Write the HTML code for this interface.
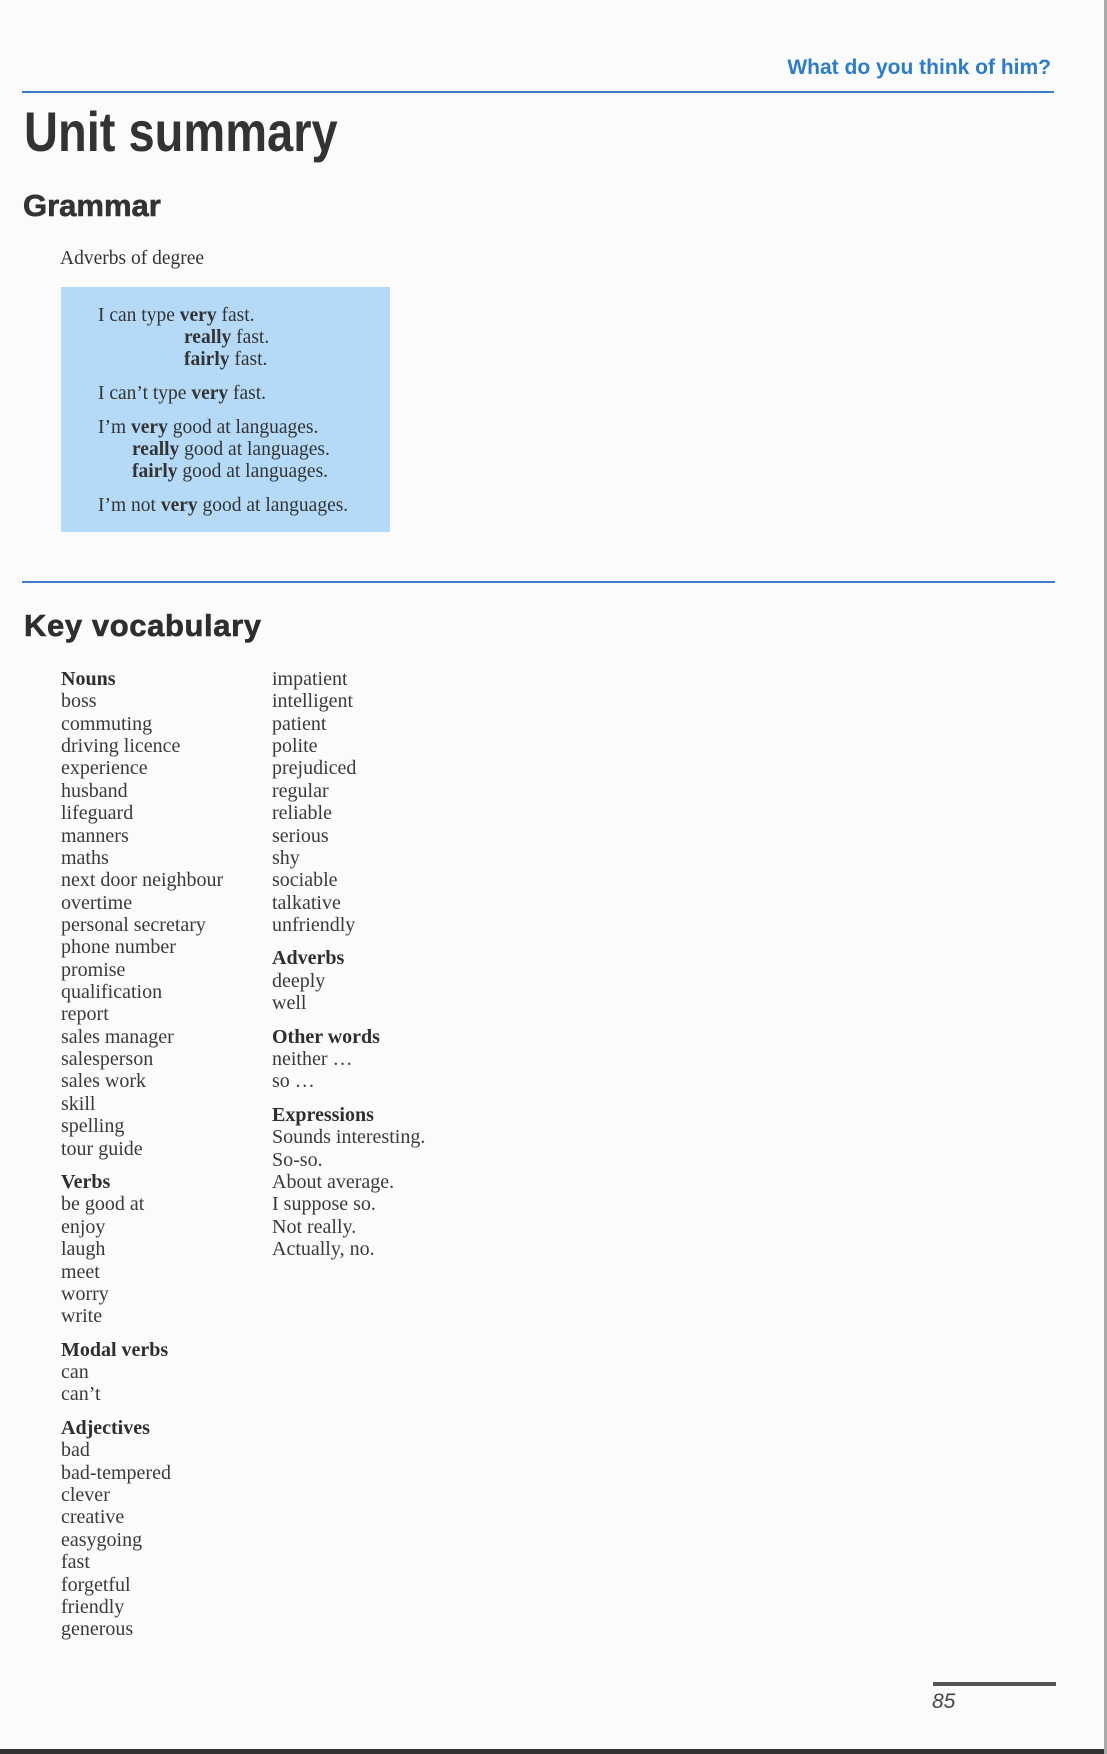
<!DOCTYPE html>
<html><head><meta charset="utf-8"><style>
html,body{margin:0;padding:0;}
body{width:1107px;height:1754px;position:relative;overflow:hidden;background:#fbfbfb;color:#333;}
.a{position:absolute;white-space:nowrap;}
.sans{font-family:"Liberation Sans",sans-serif;}
.serif{font-family:"Liberation Serif",serif;}
.hr{position:absolute;background:#3d7cc8;}
.col{position:absolute;font-family:"Liberation Serif",serif;font-size:20px;line-height:22.36px;color:#3a3a3a;}
.col div{white-space:nowrap;}
.col .h{font-weight:bold;margin-top:11.18px;color:#2e2e2e;}
.col .h.f{margin-top:0;}
.bx{position:absolute;font-family:"Liberation Serif",serif;font-size:19.5px;line-height:22px;color:#333;white-space:nowrap;}
</style></head><body>
<div class="a sans" style="right:56px;top:57px;font-size:21px;line-height:21px;color:#2b7ccb;font-weight:bold;">What do you think of him?</div>
<div class="hr" style="left:22px;top:91px;width:1032px;height:2px;"></div>
<div class="a sans" style="left:24px;top:104px;font-size:56px;line-height:56px;color:#333;font-weight:bold;transform:scaleX(0.84);transform-origin:left;">Unit summary</div>
<div class="a sans" style="left:23px;top:190px;font-size:31px;line-height:31px;font-weight:bold;color:#333;-webkit-text-stroke:0.6px #333;">Grammar</div>
<div class="a serif" style="left:60px;top:248px;font-size:19.5px;line-height:22px;color:#333;">Adverbs of degree</div>
<div class="a" style="left:61px;top:287px;width:329px;height:245px;background:#b4daf7;"></div>
<div class="bx" style="left:98px;top:305px;">I can type <b>very</b> fast.</div>
<div class="bx" style="left:184px;top:327px;"><b>really</b> fast.</div>
<div class="bx" style="left:184px;top:349px;"><b>fairly</b> fast.</div>
<div class="bx" style="left:98px;top:383px;">I can’t type <b>very</b> fast.</div>
<div class="bx" style="left:98px;top:417px;">I’m <b>very</b> good at languages.</div>
<div class="bx" style="left:132px;top:439px;"><b>really</b> good at languages.</div>
<div class="bx" style="left:132px;top:461px;"><b>fairly</b> good at languages.</div>
<div class="bx" style="left:98px;top:495px;">I’m not <b>very</b> good at languages.</div>
<div class="hr" style="left:22px;top:581px;width:1033px;height:2px;"></div>
<div class="a sans" style="left:24px;top:610px;font-size:31px;line-height:31px;font-weight:bold;color:#2e2e2e;letter-spacing:0.6px;-webkit-text-stroke:0.6px #2e2e2e;">Key vocabulary</div>
<div class="col" style="left:61px;top:668px;">
<div class="h f">Nouns</div><div>boss</div><div>commuting</div><div>driving licence</div><div>experience</div><div>husband</div><div>lifeguard</div><div>manners</div><div>maths</div><div>next door neighbour</div><div>overtime</div><div>personal secretary</div><div>phone number</div><div>promise</div><div>qualification</div><div>report</div><div>sales manager</div><div>salesperson</div><div>sales work</div><div>skill</div><div>spelling</div><div>tour guide</div>
<div class="h">Verbs</div><div>be good at</div><div>enjoy</div><div>laugh</div><div>meet</div><div>worry</div><div>write</div>
<div class="h">Modal verbs</div><div>can</div><div>can’t</div>
<div class="h">Adjectives</div><div>bad</div><div>bad-tempered</div><div>clever</div><div>creative</div><div>easygoing</div><div>fast</div><div>forgetful</div><div>friendly</div><div>generous</div>
</div>
<div class="col" style="left:272px;top:668px;">
<div>impatient</div><div>intelligent</div><div>patient</div><div>polite</div><div>prejudiced</div><div>regular</div><div>reliable</div><div>serious</div><div>shy</div><div>sociable</div><div>talkative</div><div>unfriendly</div>
<div class="h">Adverbs</div><div>deeply</div><div>well</div>
<div class="h">Other words</div><div>neither …</div><div>so …</div>
<div class="h">Expressions</div><div>Sounds interesting.</div><div>So-so.</div><div>About average.</div><div>I suppose so.</div><div>Not really.</div><div>Actually, no.</div>
</div>
<div class="a" style="left:933px;top:1682px;width:123px;height:4px;background:#555;"></div>
<div class="a sans" style="left:932px;top:1691px;font-size:21px;line-height:21px;font-style:italic;color:#444;">85</div>
<div class="a" style="left:0;top:1749px;width:1107px;height:5px;background:#333;"></div>
<div class="a" style="left:1104px;top:0;width:3px;height:1754px;background:#aaa;"></div>
</body></html>
